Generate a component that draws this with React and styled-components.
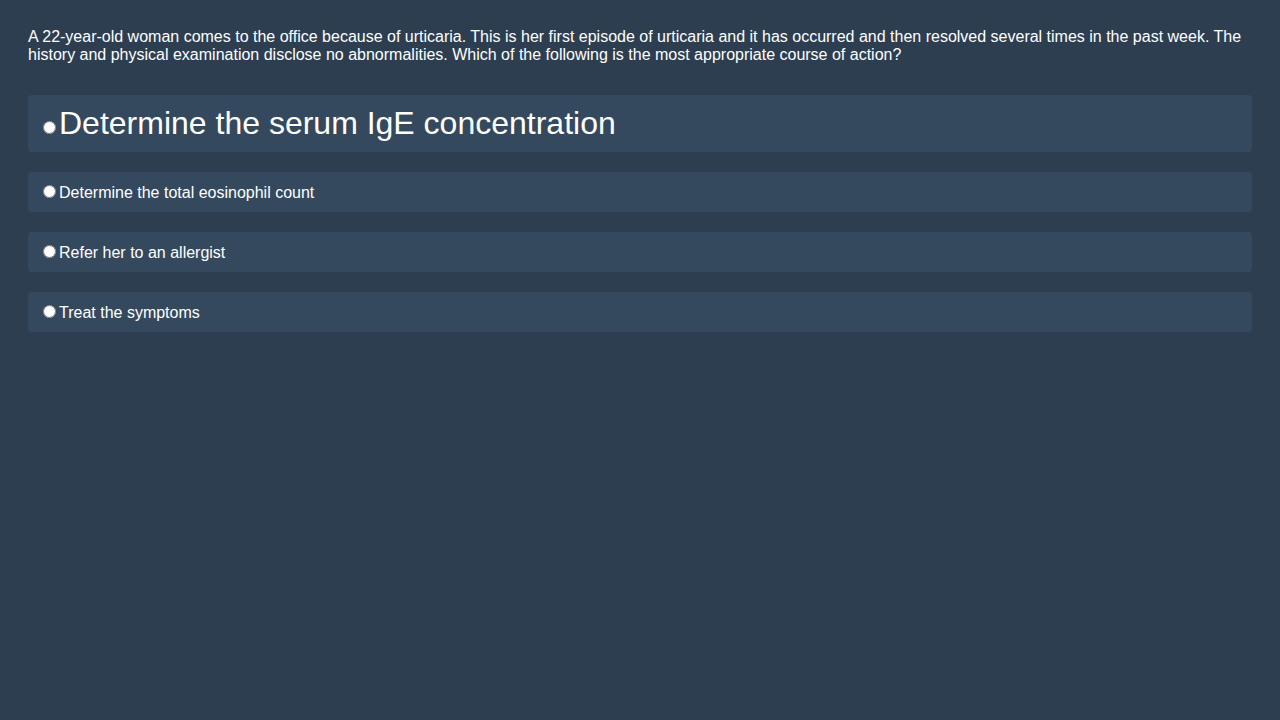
import styled, { createGlobalStyle } from 'styled-components'

const Global = createGlobalStyle`
  html, body {
    margin: 0;
    background: #2c3e50;
  }
  body {
    font-family: "Liberation Sans", Arial, sans-serif;
    font-size: 16px;
    color: #ffffff;
  }
`;

const Page = styled.div`
  min-height: 720px;
  box-sizing: border-box;
  padding: 28px;
  background: #2c3e50;
`;

const Question = styled.p`
  margin: 0 0 31px;
  line-height: 18px;
`;

const Options = styled.div`
  display: flex;
  flex-direction: column;
  gap: 20px;
`;

const Option = styled.label`
  display: block;
  padding: 10px;
  background: #34495e;
  border-radius: 4px;
  font-size: ${p => (p.$big ? '32px' : '16px')};
  cursor: pointer;
`;

const Radio = styled.input`
  margin: 3px 3px 0 5px;
  font-size: 16px;
`;

const answers = [
  'Determine the serum IgE concentration',
  'Determine the total eosinophil count',
  'Refer her to an allergist',
  'Treat the symptoms',
];

function App() {
  return (
    <Page>
      <Global />
      <Question>
        A 22-year-old woman comes to the office because of urticaria. This is her first episode of urticaria and it has occurred and then resolved several times in the past week. The history and physical examination disclose no abnormalities. Which of the following is the most appropriate course of action?
      </Question>
      <Options>
        {answers.map((a, i) => (
          <Option key={a} $big={i === 0}>
            <Radio type="radio" name="answer" />
            {a}
          </Option>
        ))}
      </Options>
    </Page>
  );
}

export default App;
